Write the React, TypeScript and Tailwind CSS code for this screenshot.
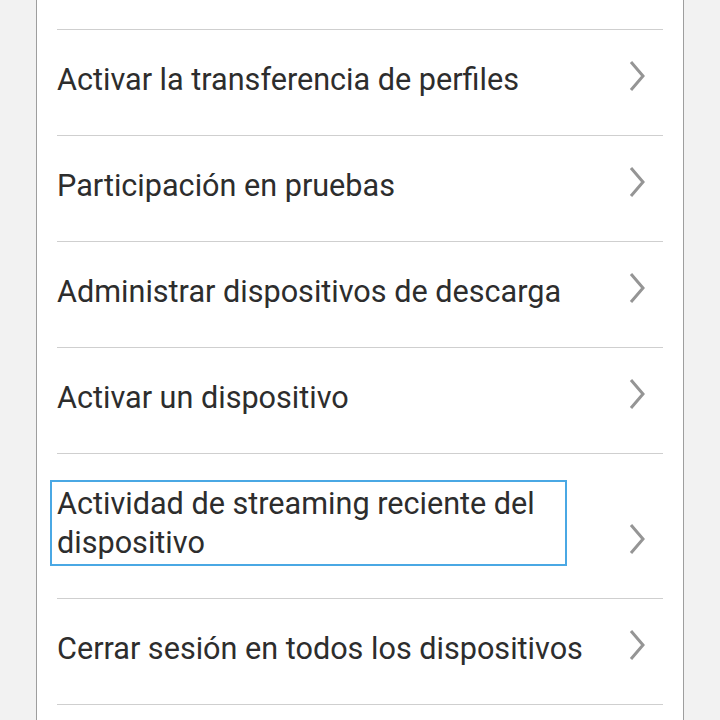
import React from "react";

const items: { label: string; focused?: boolean }[] = [
  { label: "Activar la transferencia de perfiles" },
  { label: "Participación en pruebas" },
  { label: "Administrar dispositivos de descarga" },
  { label: "Activar un dispositivo" },
  { label: "Actividad de streaming reciente del dispositivo", focused: true },
  { label: "Cerrar sesión en todos los dispositivos" },
];

function Chevron() {
  return (
    <svg
      width="18"
      height="32"
      viewBox="0 0 18 32"
      className="shrink-0 self-end mb-[36px] ml-auto mr-[17px]"
      fill="none"
    >
      <polyline
        points="3,2 15,16 3,30"
        stroke="#959595"
        strokeWidth="3"
        strokeLinecap="butt"
        strokeLinejoin="miter"
      />
    </svg>
  );
}

function Row({ label, focused }: { label: string; focused?: boolean }) {
  return (
    <a
      href="#"
      className={`flex items-center border-t border-[#cfcfcf] pb-[7px] ${
        focused ? "h-[145px]" : "h-[106px]"
      }`}
    >
      {focused ? (
        <div className="ml-[-7px] w-[517px] border-2 border-[#4aa8e4] px-[5px] py-[2px]">
          <span className="block text-[30.6px] leading-[39px] text-[#2d2d2d]">
            {label}
          </span>
        </div>
      ) : (
        <span className="text-[30.6px] leading-[39px] text-[#2d2d2d] whitespace-nowrap">
          {label}
        </span>
      )}
      <Chevron />
    </a>
  );
}

export default function App() {
  return (
    <div
      className="w-[720px] h-[720px] overflow-hidden bg-[#f2f2f2] flex"
      style={{ fontFamily: "Roboto, 'Noto Sans', sans-serif" }}
    >
      <div className="ml-[36px] w-[648px] h-full bg-white border-x border-[#9e9e9e] px-[20px]">
        <div className="h-[29px]" />
        {items.map((it) => (
          <Row key={it.label} label={it.label} focused={it.focused} />
        ))}
        <div className="h-[40px] border-t border-[#cfcfcf]" />
      </div>
    </div>
  );
}
